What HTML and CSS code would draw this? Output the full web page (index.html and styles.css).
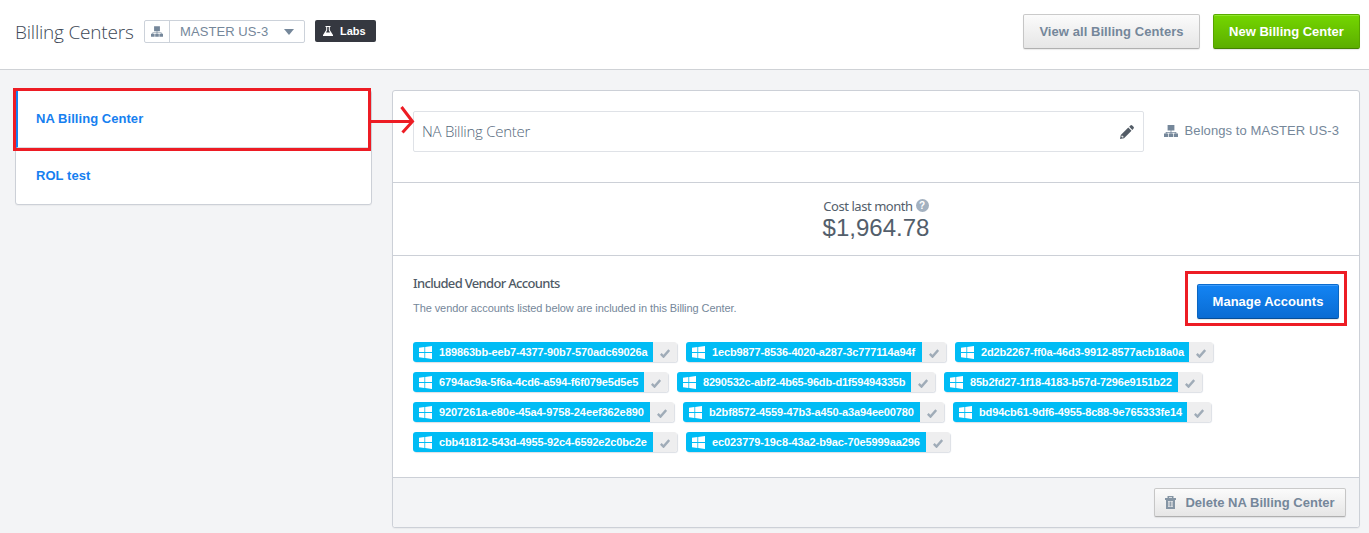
FILE: index.html
```html
<!DOCTYPE html>
<html lang="en">
<head>
<meta charset="utf-8">
<title>Billing Centers</title>
<link rel="stylesheet" href="styles.css">
</head>
<body>
<svg class="defs" width="0" height="0" aria-hidden="true">
  <symbol id="sitemap" viewBox="0 0 14 12"><path d="M3.600 0h6.800v5.600H7.400v1.500h4.900v1.500H14V12H9.800V8.600h1.700v-.8H7.400v.8h1.700V12H4.900V8.600h1.700v-.8H2.500v.8h1.700V12H0V8.600h1.700V7.100h4.900V5.600h-3z"/></symbol>
  <symbol id="windows" viewBox="0 0 13 13"><path d="M0 1.700 5.400 1v5.100H0zM6.200.9 13 0v6.100H6.200zM0 6.900h5.400V12L0 11.300zM6.200 6.900H13V13l-6.800-.9z"/></symbol>
  <symbol id="check" viewBox="0 0 10 9"><path d="M.8 4.900 3.500 7.600 9.200 1" fill="none" stroke="currentColor" stroke-width="2.400"/></symbol>
</svg>

<header class="topbar">
  <h1 class="title"><span>Billing Centers</span></h1>
  <div class="select">
    <span class="select-icon"><svg width="12" height="11"><use href="#sitemap"/></svg></span>
    <span class="select-value">MASTER US-3</span>
    <span class="caret"></span>
  </div>
  <div class="labs">
    <svg width="10" height="10" viewBox="0 0 10 10"><path fill="#fff" fill-rule="evenodd" d="M2.500 0h5v1H6.800v3L10 9v1H0V9l3.200-5V1h-.7zM4.200 1v3.300L3 6.400h4L5.800 4.300V1z"/></svg>
    <span>Labs</span>
  </div>
  <div class="actions">
    <button class="btn btn-grey">View all Billing Centers</button>
    <button class="btn btn-green">New Billing Center</button>
  </div>
</header>

<main class="content">
  <nav class="sidebar">
    <a class="side-item active">NA Billing Center</a>
    <a class="side-item">ROL test</a>
  </nav>

  <section class="panel">
    <div class="name-row">
      <div class="name-input">
        <span class="name-text">NA Billing Center</span>
        <svg width="14" height="14" viewBox="0 0 14 14"><path fill="#535c66" fill-rule="evenodd" d="M0 14l.8-4L8.300 2.500l3.200 3.200L4 13.200zM9.200 1.700 10.400.5q.9-.8 1.800 0l1.300 1.300q.9.900 0 1.800L12.400 4.900zM1.700 10.400l-.3 1.300.9.900 1.300-.3-.1-.9-1-.1-.1-.9z"/></svg>
      </div>
      <div class="belongs"><svg width="14" height="12"><use href="#sitemap"/></svg><span>Belongs to MASTER US-3</span></div>
    </div>

    <div class="cost-row">
      <div class="cost-label"><span>Cost last month</span><b class="help">?</b></div>
      <div class="cost-value">$1,964.78</div>
    </div>

    <div class="accounts">
      <div class="accounts-head">
        <div>
          <h2 class="accounts-title">Included Vendor Accounts</h2>
          <p class="accounts-note">The vendor accounts listed below are included in this Billing Center.</p>
        </div>
        <button class="btn btn-blue">Manage Accounts</button>
      </div>
      <div class="chips">
        <div class="chip-row">
          <div class="chip"><span class="chip-id w240"><svg width="13" height="13"><use href="#windows"/></svg>189863bb-eeb7-4377-90b7-570adc69026a</span><span class="chip-check"><svg width="10" height="9"><use href="#check"/></svg></span></div>
          <div class="chip"><span class="chip-id w236"><svg width="13" height="13"><use href="#windows"/></svg>1ecb9877-8536-4020-a287-3c777114a94f</span><span class="chip-check"><svg width="10" height="9"><use href="#check"/></svg></span></div>
          <div class="chip"><span class="chip-id w234"><svg width="13" height="13"><use href="#windows"/></svg>2d2b2267-ff0a-46d3-9912-8577acb18a0a</span><span class="chip-check"><svg width="10" height="9"><use href="#check"/></svg></span></div>
        </div>
        <div class="chip-row">
          <div class="chip"><span class="chip-id w231"><svg width="13" height="13"><use href="#windows"/></svg>6794ac9a-5f6a-4cd6-a594-f6f079e5d5e5</span><span class="chip-check"><svg width="10" height="9"><use href="#check"/></svg></span></div>
          <div class="chip"><span class="chip-id w234 tight"><svg width="13" height="13"><use href="#windows"/></svg>8290532c-abf2-4b65-96db-d1f59494335b</span><span class="chip-check"><svg width="10" height="9"><use href="#check"/></svg></span></div>
          <div class="chip"><span class="chip-id w234 tight"><svg width="13" height="13"><use href="#windows"/></svg>85b2fd27-1f18-4183-b57d-7296e9151b22</span><span class="chip-check"><svg width="10" height="9"><use href="#check"/></svg></span></div>
        </div>
        <div class="chip-row">
          <div class="chip"><span class="chip-id w237 loose"><svg width="13" height="13"><use href="#windows"/></svg>9207261a-e80e-45a4-9758-24eef362e890</span><span class="chip-check"><svg width="10" height="9"><use href="#check"/></svg></span></div>
          <div class="chip"><span class="chip-id w237"><svg width="13" height="13"><use href="#windows"/></svg>b2bf8572-4559-47b3-a450-a3a94ee00780</span><span class="chip-check"><svg width="10" height="9"><use href="#check"/></svg></span></div>
          <div class="chip"><span class="chip-id w234"><svg width="13" height="13"><use href="#windows"/></svg>bd94cb61-9df6-4955-8c88-9e765333fe14</span><span class="chip-check"><svg width="10" height="9"><use href="#check"/></svg></span></div>
        </div>
        <div class="chip-row">
          <div class="chip"><span class="chip-id w240"><svg width="13" height="13"><use href="#windows"/></svg>cbb41812-543d-4955-92c4-6592e2c0bc2e</span><span class="chip-check"><svg width="10" height="9"><use href="#check"/></svg></span></div>
          <div class="chip"><span class="chip-id w240 loose"><svg width="13" height="13"><use href="#windows"/></svg>ec023779-19c8-43a2-b9ac-70e5999aa296</span><span class="chip-check"><svg width="10" height="9"><use href="#check"/></svg></span></div>
        </div>
      </div>
    </div>

    <footer class="panel-foot">
      <button class="btn btn-grey btn-small">
        <svg width="11" height="13" viewBox="0 0 11 13"><path fill="#8595a4" fill-rule="evenodd" d="M2.500 0h6v2H11v2h-1v9H1V4H0V2h2.500zM4 1.200V2h3V1.200zM3 5v6h5V5zM3.600 5.500h.9v5h-.9zM5.100 5.500H6v5h-.9zM6.600 5.500h.9v5h-.9z"/></svg>
        <span>Delete NA Billing Center</span>
      </button>
    </footer>
  </section>
</main>

<svg class="callouts" width="1369" height="533" fill="none" stroke="#ed1c24" stroke-width="3">
  <rect x="14.500" y="89.500" width="355" height="60"/>
  <path d="M371 121.500h41M401.500 107l11 14.500-10 11"/>
  <rect x="1186.500" y="272.500" width="159" height="52"/>
</svg>
</body>
</html>
```
FILE: styles.css
```css
* { box-sizing: border-box; }
body {
  margin: 0;
  height: 533px;
  overflow: hidden;
  background: #f3f4f6;
  font-family: "Liberation Sans", Arial, sans-serif;
  font-size: 13px;
  color: #75879a;
}
svg { display: block; flex: none; fill: currentColor; }
.defs, .callouts { position: absolute; left: 0; top: 0; pointer-events: none; }
.callouts { fill: none; }

.topbar {
  display: flex;
  align-items: flex-start;
  height: 70px;
  padding: 14px 9px 0 15px;
  background: #fff;
  border-bottom: 1px solid #cfd2d6;
}
.title {
  width: 129px;
  margin: 5px 0 0;
  font: 300 19px/26px "Open Sans", sans-serif;
  letter-spacing: -0.2px;
  color: #3d4856;
  white-space: nowrap;
}
.select {
  display: flex;
  align-items: center;
  width: 161px;
  height: 23px;
  margin-top: 6px;
  border: 1px solid #ccd2da;
  border-radius: 2px;
}
.select-icon {
  display: flex;
  align-items: center;
  justify-content: center;
  width: 25px;
  height: 21px;
  border-right: 1px solid #ccd2da;
}
.select-value { padding-left: 10px; width: 114px; letter-spacing: 0.08px; white-space: nowrap; }
.caret { border: 5px solid transparent; border-top: 6px solid #75879a; border-bottom: 0; }
.labs {
  display: flex;
  align-items: center;
  gap: 7px;
  width: 61px;
  height: 22px;
  margin: 6px 0 0 10px;
  padding-left: 8px;
  border-radius: 2px;
  background: #353840;
  color: #fff;
  font-size: 11px;
  font-weight: bold;
}
.actions { display: flex; gap: 13px; margin-left: auto; }

.btn {
  display: flex;
  align-items: center;
  justify-content: center;
  height: 35px;
  padding: 0;
  border: 1px solid;
  border-radius: 2px;
  font: bold 13px "Liberation Sans", Arial, sans-serif;
  white-space: nowrap;
}
.btn-grey {
  width: 177px;
  color: #75879a;
  background: linear-gradient(#fbfbfb, #e6e6e6);
  border-color: #cacaca #c6c6c6 #b0b0b0;
  box-shadow: 0 1px 1px rgba(0, 0, 0, .08);
  letter-spacing: 0.06px;
}
.btn-green {
  width: 147px;
  color: #fff;
  background: linear-gradient(#74d600, #5cae00);
  border-color: #5aab00 #57a300 #438200;
  box-shadow: inset 0 1px #90e62e, 0 1px 1px rgba(0, 0, 0, .1);
}
.btn-blue {
  width: 142px;
  color: #fff;
  background: linear-gradient(#1384f4, #0a6cd3);
  border-color: #0b6ccf #0a66c2 #064e98;
  box-shadow: inset 0 1px #3c9bfa, 0 1px 1px rgba(0, 0, 0, .1);
}
.btn-small { width: 192px; height: 29px; gap: 9px; letter-spacing: 0; }

.content {
  display: flex;
  align-items: flex-start;
  gap: 20px;
  padding: 20px 9px 0 15px;
}
.sidebar {
  width: 357px;
  height: 115px;
  border: 1px solid #ccd0d7;
  border-radius: 3px;
  background: #fff;
  box-shadow: 0 1px 1px rgba(0, 0, 0, .04);
}
.side-item {
  display: flex;
  align-items: center;
  height: 56px;
  padding: 0 0 2px 20px;
  color: #1680f0;
  font-weight: bold;
  letter-spacing: 0.05px;
}
.side-item.active {
  height: 57px;
  padding-left: 18px;
  border-left: 2px solid #1680f0;
  border-bottom: 1px solid #d9dce1;
}

.panel {
  width: 968px;
  height: 438px;
  border: 1px solid #ccd0d7;
  border-radius: 3px;
  background: #fff;
  box-shadow: 0 1px 1px rgba(0, 0, 0, .04);
}
.name-row {
  display: flex;
  align-items: flex-start;
  height: 92px;
  padding: 20px 20px 0;
  border-bottom: 1px solid #ccd0d7;
}
.name-input {
  display: flex;
  align-items: center;
  justify-content: space-between;
  width: 731px;
  height: 41px;
  padding: 0 9px 0 8px;
  border: 1px solid #dfe2e7;
  border-radius: 2px;
}
.name-text {
  padding-bottom: 2px;
  font: 300 15px "Open Sans", sans-serif;
  letter-spacing: -0.28px;
  color: #54677b;
}
.belongs {
  display: flex;
  align-items: center;
  gap: 7px;
  height: 39px;
  margin-left: 20px;
  letter-spacing: 0.09px;
  white-space: nowrap;
}
.cost-row {
  height: 73px;
  padding-top: 14px;
  text-align: center;
  border-bottom: 1px solid #ccd0d7;
  color: #535e6b;
}
.cost-label {
  display: flex;
  justify-content: center;
  align-items: center;
  gap: 3px;
  height: 17px;
  font: 400 13px "Noto Sans", sans-serif;
  letter-spacing: -0.45px;
}
.help {
  width: 13px;
  height: 13px;
  border-radius: 50%;
  background: #a3b1c0;
  color: #fff;
  font: bold 10px/13px "Liberation Sans", sans-serif;
  letter-spacing: 0;
}
.cost-value { font-size: 24px; line-height: 27px; }

.accounts { height: 222px; padding: 17px 20px 0; border-bottom: 1px solid #ccd0d7; }
.accounts-head { display: flex; justify-content: space-between; height: 69px; }
.accounts-head .btn { margin-top: 11px; }
.accounts-title {
  margin: 0;
  font: 500 13px/20px "Noto Sans", sans-serif;
  letter-spacing: -0.67px;
  color: #4f5a66;
}
.accounts-note { margin: 9px 0 0; font-size: 11px; line-height: 13px; letter-spacing: -0.08px; }
.chips { display: flex; flex-direction: column; gap: 10px; }
.chip-row { display: flex; gap: 9px; }
.chip {
  display: flex;
  height: 20px;
  border-radius: 3px;
  overflow: hidden;
  box-shadow: 1px 1px 1px #dcdfe5;
}
.chip-id {
  display: flex;
  align-items: center;
  gap: 7px;
  padding: 0 0 0 6px;
  background: #00bcf5;
  color: #fff;
  font-size: 11px;
  font-weight: bold;
  letter-spacing: -0.14px;
  white-space: nowrap;
}
.chip-id.tight { letter-spacing: -0.19px; }
.chip-id.loose { letter-spacing: -0.09px; }
.w231 { width: 231px; }
.w234 { width: 234px; }
.w236 { width: 236px; }
.w237 { width: 237px; }
.w240 { width: 240px; }
.chip-check {
  display: flex;
  align-items: center;
  justify-content: center;
  width: 24px;
  padding-top: 2px;
  background: #eeeeef;
  color: #a0acb8;
}
.panel-foot {
  display: flex;
  justify-content: flex-end;
  height: 49px;
  padding: 10px 13px 0 0;
  background: #f3f4f6;
  border-radius: 0 0 3px 3px;
}
```
